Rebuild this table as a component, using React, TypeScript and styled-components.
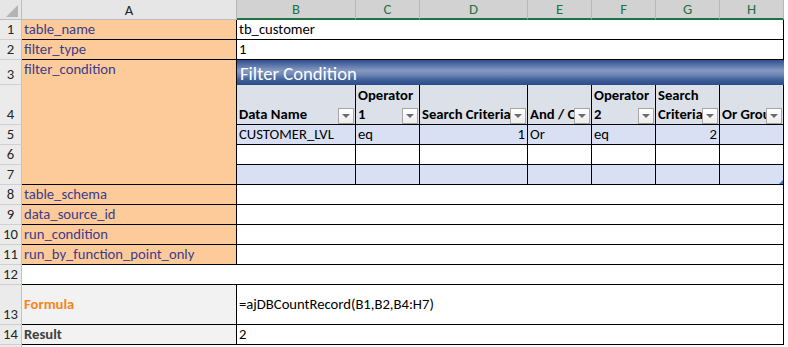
import React from 'react';
import styled, { createGlobalStyle } from 'styled-components';

const GlobalStyle = createGlobalStyle`
  html, body {
    margin: 0;
    padding: 0;
    background: #ffffff;
    overflow: hidden;
  }
  body {
    font-family: Carlito, Calibri, "Liberation Sans", Arial, sans-serif;
    font-size: 14.67px;
    color: #000;
  }
`;

const Sheet = styled.div`
  display: grid;
  grid-template-columns: 22px 215px 119px 64px 108px 64px 64px 64px 64px;
  grid-template-rows: 20px 20px 20px 25px 40px repeat(8, 20px) 40px 20px 20px;
  width: 784px;
  height: 347px;
  overflow: hidden;
`;

const Corner = styled.div`
  box-sizing: border-box;
  background: #e6e6e6;
  border-right: 1px solid #bdbdbd;
  border-bottom: 1px solid #bdbdbd;
  display: flex;
  align-items: flex-end;
  justify-content: flex-end;
  padding: 0 3px 2px 0;
`;

const ColHead = styled.div<{ $selected?: boolean }>`
  box-sizing: border-box;
  background: ${p => (p.$selected ? '#d2d2d2' : '#e6e6e6')};
  color: ${p => (p.$selected ? '#217346' : '#262626')};
  border-right: 1px solid #b8b8b8;
  border-bottom: ${p => (p.$selected ? '2px solid #217346' : '1px solid #bdbdbd')};
  display: flex;
  align-items: center;
  justify-content: center;
  line-height: 18px;
`;

const RowHead = styled.div`
  box-sizing: border-box;
  background: #ebebeb;
  color: #262626;
  border-right: 1px solid #c2c2c2;
  border-bottom: 1px solid #d0d0d0;
  display: flex;
  align-items: flex-end;
  justify-content: center;
  line-height: 18px;
  padding-bottom: 1px;
`;

type CellProps = {
  $cols?: number;
  $rows?: number;
  $bg?: string;
  $color?: string;
  $bold?: boolean;
  $align?: 'left' | 'right';
  $valign?: 'start' | 'center' | 'end';
  $noRight?: boolean;
  $noBottom?: boolean;
};

const Cell = styled.div<CellProps>`
  box-sizing: border-box;
  position: relative;
  grid-column: span ${p => p.$cols ?? 1};
  grid-row: span ${p => p.$rows ?? 1};
  background: ${p => p.$bg ?? '#ffffff'};
  color: ${p => p.$color ?? '#000000'};
  font-weight: ${p => (p.$bold ? 700 : 400)};
  border-right: 1px solid ${p => (p.$noRight ? 'transparent' : '#000000')};
  border-bottom: 1px solid ${p => (p.$noBottom ? 'transparent' : '#000000')};
  display: flex;
  align-items: ${p =>
    p.$valign === 'start' ? 'flex-start' : p.$valign === 'center' ? 'center' : 'flex-end'};
  justify-content: ${p => (p.$align === 'right' ? 'flex-end' : 'flex-start')};
  padding: 0 2px 1px 2px;
  line-height: 18px;
  white-space: nowrap;
  overflow: hidden;
`;

const Label = styled(Cell)`
  background: #fccb99;
  color: #3b3b8c;
`;

const TableTitle = styled.div`
  grid-column: span 7;
  box-sizing: border-box;
  background: linear-gradient(
    to bottom,
    #2f4e8c 0%,
    #5a76aa 22%,
    #8499c0 42%,
    #6f88b6 58%,
    #3f5e99 80%,
    #2b4a88 100%
  );
  color: #ffffff;
  font-size: 18.67px;
  line-height: 20px;
  display: flex;
  align-items: flex-end;
  padding: 0 0 1px 3px;
  white-space: nowrap;
`;

const HeaderCell = styled(Cell)`
  background: #dbe0e9;
  font-weight: 700;
  flex-direction: column;
  justify-content: flex-end;
  align-items: flex-start;
  line-height: 19px;
  padding: 0 0 0 2px;
`;

const FilterButton = styled.span`
  position: absolute;
  right: 1px;
  bottom: 0;
  width: 16px;
  height: 16px;
  box-sizing: border-box;
  border: 1px solid #a6a6a6;
  background: linear-gradient(to bottom, #ffffff, #ececec);

  &::after {
    content: '';
    position: absolute;
    left: 3px;
    top: 5px;
    width: 0;
    height: 0;
    border-left: 4px solid transparent;
    border-right: 4px solid transparent;
    border-top: 4px solid #6b6b6b;
  }
`;

const ResizeHandle = styled.span`
  position: absolute;
  right: 0;
  bottom: 0;
  width: 0;
  height: 0;
  border-left: 4px solid transparent;
  border-bottom: 4px solid #4a6fc0;
`;

const BAND = '#d9e0f3';

const headers: string[][] = [
  ['Data Name'],
  ['Operator', '1'],
  ['Search Criteria'],
  ['And / Or'],
  ['Operator', '2'],
  ['Search', 'Criteria'],
  ['Or Group'],
];

type DataValue = { text: string; right?: boolean };

const dataRows: { num: number; band: boolean; values: DataValue[] }[] = [
  {
    num: 5,
    band: true,
    values: [
      { text: 'CUSTOMER_LVL' },
      { text: 'eq' },
      { text: '1', right: true },
      { text: 'Or' },
      { text: 'eq' },
      { text: '2', right: true },
      { text: '' },
    ],
  },
  { num: 6, band: false, values: Array.from({ length: 7 }, () => ({ text: '' })) },
  { num: 7, band: true, values: Array.from({ length: 7 }, () => ({ text: '' })) },
];

const attributes = ['table_schema', 'data_source_id', 'run_condition', 'run_by_function_point_only'];

export default function App() {
  return (
    <>
      <GlobalStyle />
      <Sheet>
        <Corner>
          <svg width="12" height="12" viewBox="0 0 12 12">
            <polygon points="12,0 12,12 0,12" fill="#b4b4b4" />
          </svg>
        </Corner>
        <ColHead>A</ColHead>
        {['B', 'C', 'D', 'E', 'F', 'G', 'H'].map(c => (
          <ColHead key={c} $selected>
            {c}
          </ColHead>
        ))}

        <RowHead>1</RowHead>
        <Label>table_name</Label>
        <Cell $cols={7}>tb_customer</Cell>

        <RowHead>2</RowHead>
        <Label>filter_type</Label>
        <Cell $cols={7}>1</Cell>

        <RowHead>3</RowHead>
        <Label $rows={5} $valign="start">
          filter_condition
        </Label>
        <TableTitle>Filter Condition</TableTitle>

        <RowHead>4</RowHead>
        {headers.map((lines, i) => (
          <HeaderCell key={i}>
            {lines.map(line => (
              <span key={line}>{line}</span>
            ))}
            <FilterButton />
          </HeaderCell>
        ))}

        {dataRows.map(row => (
          <React.Fragment key={row.num}>
            <RowHead>{row.num}</RowHead>
            {row.values.map((v, i) => (
              <Cell key={i} $bg={row.band ? BAND : '#ffffff'} $align={v.right ? 'right' : 'left'}>
                {v.text}
                {row.num === 7 && i === 6 && <ResizeHandle />}
              </Cell>
            ))}
          </React.Fragment>
        ))}

        {attributes.map((name, i) => (
          <React.Fragment key={name}>
            <RowHead>{8 + i}</RowHead>
            <Label>{name}</Label>
            <Cell $cols={7} />
          </React.Fragment>
        ))}

        <RowHead>12</RowHead>
        <Cell $cols={8} />

        <RowHead>13</RowHead>
        <Cell $bg="#f2f2f2" $color="#f7861c" $bold $valign="center">
          Formula
        </Cell>
        <Cell $cols={7} $valign="center">
          =ajDBCountRecord(B1,B2,B4:H7)
        </Cell>

        <RowHead>14</RowHead>
        <Cell $bg="#f2f2f2" $color="#404040" $bold>
          Result
        </Cell>
        <Cell $cols={7}>2</Cell>

        <RowHead />
        <Cell $cols={8} $noRight $noBottom />
      </Sheet>
    </>
  );
}
